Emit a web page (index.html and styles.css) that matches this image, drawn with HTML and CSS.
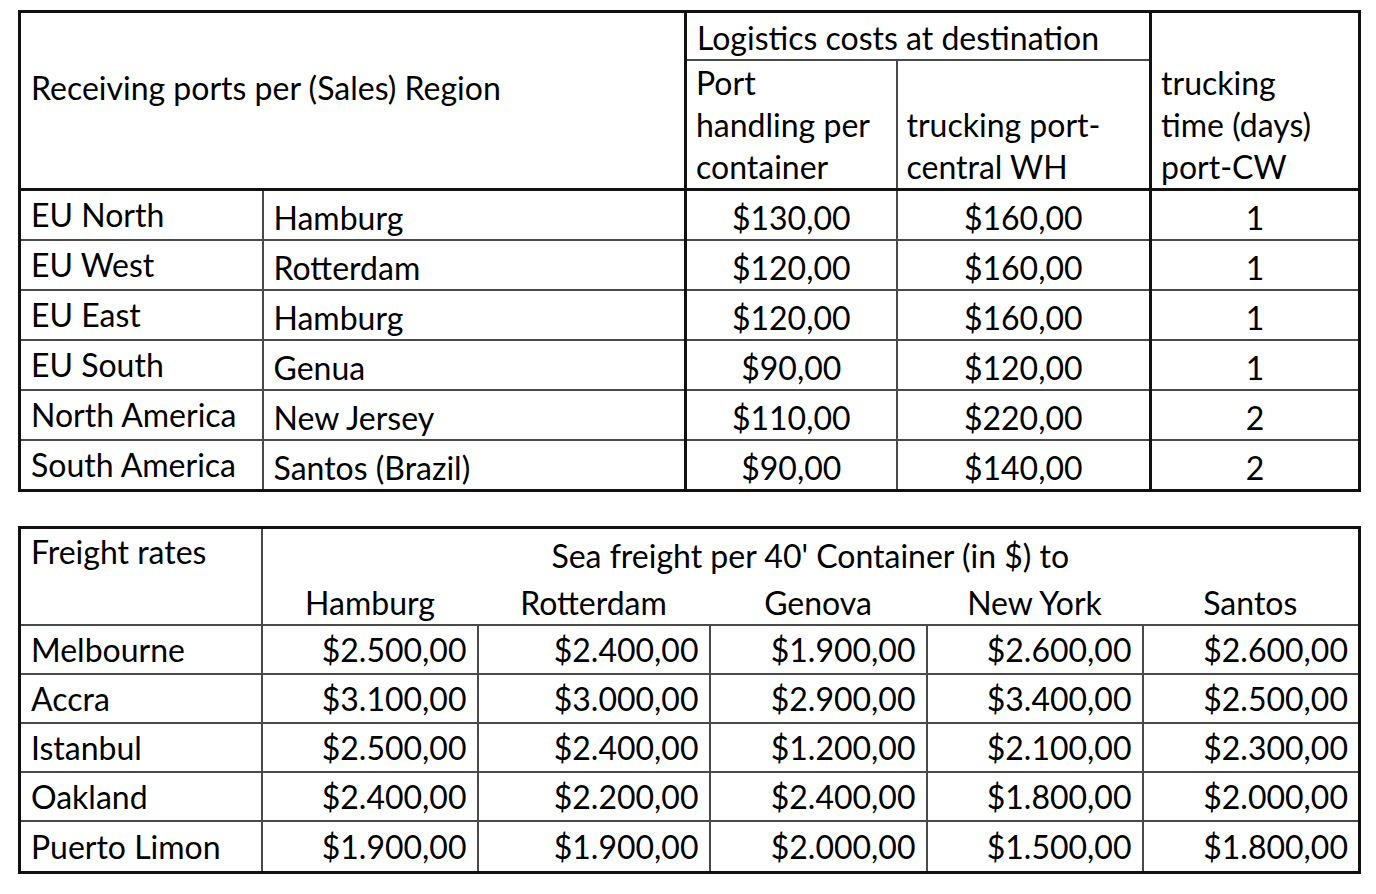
FILE: index.html
```html
<!DOCTYPE html>
<html lang="en">
<head>
<meta charset="utf-8">
<title>Logistics costs</title>
<link rel="stylesheet" href="styles.css">
</head>
<body>
<div class="page">
  <table class="t1">
    <colgroup>
      <col class="c243"><col class="c423"><col class="c211"><col class="c254"><col class="c209">
    </colgroup>
    <tr class="h1">
      <th class="region" rowspan="2" colspan="2">Receiving ports per (Sales) Region</th>
      <th class="logi thick-l" colspan="2">Logistics costs at destination</th>
      <th class="tt thick-l" rowspan="2">trucking<br>time (days)<br>port-CW</th>
    </tr>
    <tr class="h2">
      <th class="sub thick-l">Port<br>handling per<br>container</th>
      <th class="sub">trucking port-<br>central WH</th>
    </tr>
    <tr class="first">
      <td class="lab">EU North</td><td class="port">Hamburg</td>
      <td class="num thick-l">$130,00</td><td class="num">$160,00</td><td class="num thick-l">1</td>
    </tr>
    <tr>
      <td class="lab">EU West</td><td class="port">Rotterdam</td>
      <td class="num thick-l">$120,00</td><td class="num">$160,00</td><td class="num thick-l">1</td>
    </tr>
    <tr class="short">
      <td class="lab">EU East</td><td class="port">Hamburg</td>
      <td class="num thick-l">$120,00</td><td class="num">$160,00</td><td class="num thick-l">1</td>
    </tr>
    <tr class="short">
      <td class="lab">EU South</td><td class="port">Genua</td>
      <td class="num thick-l">$90,00</td><td class="num">$120,00</td><td class="num thick-l">1</td>
    </tr>
    <tr class="short">
      <td class="lab">North America</td><td class="port">New Jersey</td>
      <td class="num thick-l">$110,00</td><td class="num">$220,00</td><td class="num thick-l">2</td>
    </tr>
    <tr>
      <td class="lab">South America</td><td class="port">Santos (Brazil)</td>
      <td class="num thick-l">$90,00</td><td class="num">$140,00</td><td class="num thick-l">2</td>
    </tr>
  </table>

  <table class="t2">
    <colgroup>
      <col class="c242"><col class="c216"><col class="c232"><col class="c217"><col class="c216"><col class="c217">
    </colgroup>
    <tr class="fh1">
      <th class="fr" rowspan="2">Freight rates</th>
      <th class="sea" colspan="5">Sea freight per 40' Container (in $) to</th>
    </tr>
    <tr class="fh2">
      <th class="city">Hamburg</th>
      <th class="city">Rotterdam</th>
      <th class="city">Genova</th>
      <th class="city">New York</th>
      <th class="city">Santos</th>
    </tr>
    <tr>
      <td class="lab">Melbourne</td>
      <td class="amt">$2.500,00</td><td class="amt">$2.400,00</td><td class="amt">$1.900,00</td><td class="amt">$2.600,00</td><td class="amt">$2.600,00</td>
    </tr>
    <tr>
      <td class="lab">Accra</td>
      <td class="amt">$3.100,00</td><td class="amt">$3.000,00</td><td class="amt">$2.900,00</td><td class="amt">$3.400,00</td><td class="amt">$2.500,00</td>
    </tr>
    <tr>
      <td class="lab">Istanbul</td>
      <td class="amt">$2.500,00</td><td class="amt">$2.400,00</td><td class="amt">$1.200,00</td><td class="amt">$2.100,00</td><td class="amt">$2.300,00</td>
    </tr>
    <tr>
      <td class="lab">Oakland</td>
      <td class="amt">$2.400,00</td><td class="amt">$2.200,00</td><td class="amt">$2.400,00</td><td class="amt">$1.800,00</td><td class="amt">$2.000,00</td>
    </tr>
    <tr class="last">
      <td class="lab">Puerto Limon</td>
      <td class="amt">$1.900,00</td><td class="amt">$1.900,00</td><td class="amt">$2.000,00</td><td class="amt">$1.500,00</td><td class="amt">$1.800,00</td>
    </tr>
  </table>
</div>
</body>
</html>
```
FILE: styles.css
```css
html, body {
  margin: 0;
  padding: 0;
  background: #ffffff;
}

body {
  font-family: Lato, "Open Sans", sans-serif;
  font-size: 32px;
  color: #000000;
}

.page {
  padding: 10px 0 0 18px;
  display: flex;
  flex-direction: column;
  align-items: flex-start;
  gap: 34px;
}

table {
  border-collapse: collapse;
  table-layout: fixed;
  width: 1340px;
  border: 3px solid #111111;
}

th, td {
  font-weight: normal;
  padding: 0 10px;
  line-height: 42px;
  white-space: nowrap;
  overflow: hidden;
}

.c242 { width: 242px; }
.c243 { width: 243px; }
.c423 { width: 423px; }
.c211 { width: 211px; }
.c254 { width: 254px; }
.c209 { width: 209px; }
.c216 { width: 216px; }
.c232 { width: 232px; }
.c217 { width: 217px; }

/* Table 1 */
.t1 th, .t1 td {
  border: 2px solid #4a4a4a;
}

.t1 .thick-l {
  border-left: 3px solid #111111;
}

.t1 .h1 th { height: 46px; }
.t1 .h2 th { height: 127px; }

.t1 .region {
  text-align: left;
  vertical-align: middle;
  padding-left: 10px;
  padding-bottom: 26px;
}

.t1 .logi {
  text-align: left;
  vertical-align: bottom;
  padding-left: 10px;
}

.t1 .sub {
  text-align: left;
  vertical-align: bottom;
  padding-left: 9px;
}

.t1 .tt {
  text-align: left;
  vertical-align: bottom;
  padding-left: 9px;
}

.t1 .first td {
  border-top: 3px solid #111111;
}

.t1 td {
  height: 42px;
  padding-top: 6px;
  vertical-align: middle;
}

.t1 .lab {
  height: 48px;
  padding-top: 0;
  padding-left: 10px;
}

.t1 .short td {
  height: 41px;
  padding-top: 6px;
}

.t1 .short .lab {
  height: 47px;
  padding-top: 0;
}

.t1 .port {
  padding-left: 10px;
}

.t1 .num {
  text-align: center;
}

/* Table 2 */
.t2 th {
  border: none;
}

.t2 td {
  border: 2px solid #4a4a4a;
  height: 47px;
  vertical-align: middle;
}

.t2 .fr {
  text-align: left;
  vertical-align: top;
  padding-left: 10px;
  padding-top: 2px;
  border-right: 2px solid #4a4a4a;
}

.t2 .fh1 th { height: 48px; }
.t2 .fh2 th { height: 39px; padding-top: 5px; }

.t2 .sea {
  text-align: center;
  vertical-align: bottom;
}

.t2 .city {
  text-align: center;
  vertical-align: middle;
}

.t2 .lab {
  padding-left: 10px;
}

.t2 .amt {
  text-align: right;
  padding-right: 10px;
}

.t2 .last td {
  height: 49px;
}
```
